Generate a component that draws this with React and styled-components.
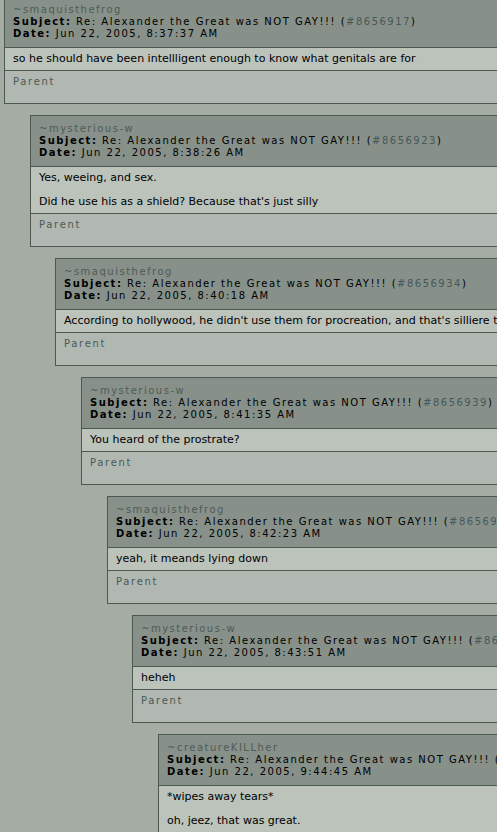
import React from 'react'
import styled, { createGlobalStyle } from 'styled-components'

const GlobalStyle = createGlobalStyle`
  html, body {
    margin: 0;
    padding: 0;
    background: #a4aca4;
    overflow: hidden;
  }
`

const Thread = styled.div`
  width: 497px;
  height: 832px;
  overflow: hidden;
  font-family: 'DejaVu Sans', Verdana, sans-serif;
`

const List = styled.div`
  display: flex;
  flex-direction: column;
  gap: 11px;
  margin-top: -4px;
`

const Post = styled.div`
  margin-left: ${(p) => Math.round(4 + p.$depth * 25.67)}px;
  width: 640px;
  flex-shrink: 0;
  border: 1px solid #4b5a50;
  background: #b1b7b1;
`

const Header = styled.div`
  background: #879089;
  border-bottom: 1px solid #4b5a50;
  padding: 7px 8px;
  font-size: 10px;
  line-height: 12px;
  letter-spacing: 1.5px;
  color: #000;
  white-space: nowrap;
`

const Author = styled.div`
  color: #4f5c56;
`

const Label = styled.b`
  font-weight: bold;
`

const PostId = styled.span`
  color: #46585a;
`

const Body = styled.div`
  background: #bbc3bb;
  border-bottom: 1px solid #4b5a50;
  padding: 5px 8px;
  font-size: 11px;
  line-height: 12px;
  color: #000;
  white-space: nowrap;

  p {
    margin: 0;
  }
  p + p {
    margin-top: 12px;
  }
`

const Footer = styled.div`
  padding: 5px 8px 15px;
  font-size: 10px;
  line-height: 12px;
  letter-spacing: 1.7px;
  color: #4a5955;
`

const posts = [
  {
    author: 'smaquisthefrog',
    id: '8656917',
    date: 'Jun 22, 2005, 8:37:37 AM',
    body: ['so he should have been intellligent enough to know what genitals are for'],
  },
  {
    author: 'mysterious-w',
    id: '8656923',
    date: 'Jun 22, 2005, 8:38:26 AM',
    body: ['Yes, weeing, and sex.', "Did he use his as a shield? Because that's just silly"],
  },
  {
    author: 'smaquisthefrog',
    id: '8656934',
    date: 'Jun 22, 2005, 8:40:18 AM',
    body: ["According to hollywood, he didn't use them for procreation, and that's silliere than anything"],
  },
  {
    author: 'mysterious-w',
    id: '8656939',
    date: 'Jun 22, 2005, 8:41:35 AM',
    body: ['You heard of the prostrate?'],
  },
  {
    author: 'smaquisthefrog',
    id: '8656948',
    date: 'Jun 22, 2005, 8:42:23 AM',
    body: ['yeah, it meands lying down'],
  },
  {
    author: 'mysterious-w',
    id: '8656960',
    date: 'Jun 22, 2005, 8:43:51 AM',
    body: ['heheh'],
  },
  {
    author: 'creatureKILLher',
    id: '8659470',
    date: 'Jun 22, 2005, 9:44:45 AM',
    body: ['*wipes away tears*', 'oh, jeez, that was great.'],
  },
]

const Reply = ({ post, depth }) => (
  <Post $depth={depth}>
    <Header>
      <Author>~{post.author}</Author>
      <div>
        <Label>Subject:</Label> Re: Alexander the Great was NOT GAY!!! (
        <PostId>#{post.id}</PostId>)
      </div>
      <div>
        <Label>Date:</Label> {post.date}
      </div>
    </Header>
    <Body>
      {post.body.map((line, i) => (
        <p key={i}>{line}</p>
      ))}
    </Body>
    <Footer>Parent</Footer>
  </Post>
)

export default function App() {
  return (
    <Thread>
      <GlobalStyle />
      <List>
        {posts.map((post, i) => (
          <Reply key={post.id} post={post} depth={i} />
        ))}
      </List>
    </Thread>
  )
}
